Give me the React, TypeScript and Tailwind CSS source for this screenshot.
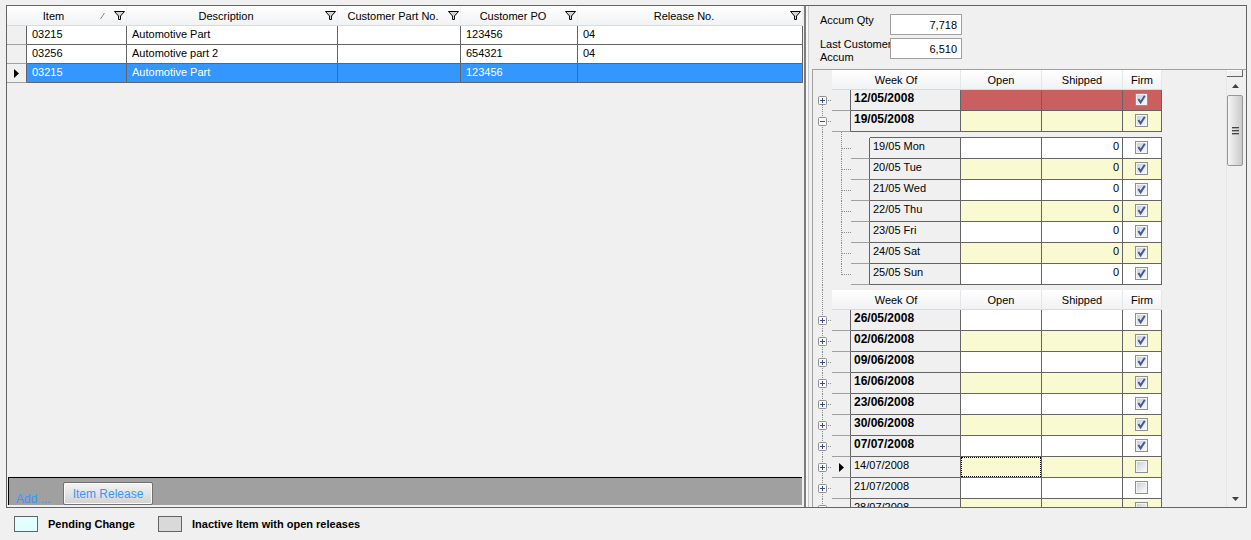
import { useState } from "react";

type Release = { item: string; description: string; partNo: string; po: string; release: string };
type Week = { date: string; firm: boolean; past?: boolean; days?: string[] };

const releases: Release[] = [
  { item: "03215", description: "Automotive Part", partNo: "", po: "123456", release: "04" },
  { item: "03256", description: "Automotive part 2", partNo: "", po: "654321", release: "04" },
  { item: "03215", description: "Automotive Part", partNo: "", po: "123456", release: "" },
];

const firstWeeks: Week[] = [
  { date: "12/05/2008", firm: true, past: true },
  {
    date: "19/05/2008",
    firm: true,
    days: ["19/05 Mon", "20/05 Tue", "21/05 Wed", "22/05 Thu", "23/05 Fri", "24/05 Sat", "25/05 Sun"],
  },
];

const laterWeeks: Week[] = [
  { date: "26/05/2008", firm: true },
  { date: "02/06/2008", firm: true },
  { date: "09/06/2008", firm: true },
  { date: "16/06/2008", firm: true },
  { date: "23/06/2008", firm: true },
  { date: "30/06/2008", firm: true },
  { date: "07/07/2008", firm: true },
  { date: "14/07/2008", firm: false },
  { date: "21/07/2008", firm: false },
  { date: "28/07/2008", firm: false },
];

function FilterIcon() {
  return (
    <svg width="11" height="9" viewBox="0 0 11 9" className="block">
      <path d="M0.5 0.5H10.5L6.5 5V8.5H4.5V5Z" fill="#d4d4d4" stroke="#000" />
    </svg>
  );
}

function RowArrow() {
  return (
    <svg width="5" height="9" viewBox="0 0 5 9" className="mx-auto block">
      <path d="M0 0L5 4.5L0 9Z" fill="#000" />
    </svg>
  );
}

function SortGlyph() {
  return (
    <svg width="6" height="8" viewBox="0 0 6 8" className="mr-2 block">
      <path d="M0.5 7L4.5 1" stroke="#8a8a8a" fill="none" />
    </svg>
  );
}

function HeaderCell({ label, sorted, span }: { label: string; sorted?: boolean; span?: number }) {
  return (
    <th
      colSpan={span}
      className="border-b border-b-[#dadada] border-r border-r-[#f0f0f0] bg-linear-to-b from-white to-[#f1f2f4] p-0 font-normal"
    >
      <div className="flex items-center pr-px">
        <span className="flex-1 text-center">{label}</span>
        {sorted && <SortGlyph />}
        <button type="button" aria-label={`Filter ${label}`}>
          <FilterIcon />
        </button>
      </div>
    </th>
  );
}

function ReleaseTable() {
  const [selected, setSelected] = useState(2);
  return (
    <table className="w-full table-fixed border-separate border-spacing-0 text-[11px] leading-4">
      <colgroup>
        <col className="w-[20px]" />
        <col className="w-[100px]" />
        <col className="w-[211px]" />
        <col className="w-[123px]" />
        <col className="w-[117px]" />
        <col />
      </colgroup>
      <thead>
        <tr className="h-5">
          <HeaderCell label="Item" sorted span={2} />
          <HeaderCell label="Description" />
          <HeaderCell label="Customer Part No." />
          <HeaderCell label="Customer PO" />
          <HeaderCell label="Release No." />
        </tr>
      </thead>
      <tbody>
        {releases.map((r, i) => {
          const on = i === selected;
          return (
            <tr key={i} onClick={() => setSelected(i)} className={on ? "h-[19px] bg-[#3397ff] text-white" : "h-[19px] bg-white"}>
              <td className="border-r border-b border-r-[#646464] border-b-[#a0a0a0] bg-[#f0f0f0] p-0 align-middle">
                {on && <RowArrow />}
              </td>
              {[r.item, r.description, r.partNo, r.po, r.release].map((v, c) => (
                <td key={c} className="border-r border-b border-[#646464] p-0 pl-[5px] align-top">
                  {v}
                </td>
              ))}
            </tr>
          );
        })}
      </tbody>
    </table>
  );
}

function FirmBox({ label, checked }: { label: string; checked: boolean }) {
  return (
    <span className="relative mt-[3px] ml-3 block size-[13px]">
      <input
        type="checkbox"
        aria-label={label}
        defaultChecked={checked}
        className="peer block size-[13px] appearance-none border border-[#8e8f8f] bg-linear-to-br from-[#c5cbd3] to-white shadow-[inset_0_0_0_1px_#f4f4f4]"
      />
      <svg
        viewBox="0 0 13 13"
        className="pointer-events-none absolute inset-0 hidden size-[13px] peer-checked:block"
      >
        <path d="M3.4 6L5.6 9.4L9.8 2.8" fill="none" stroke="#4259a0" strokeWidth="2" />
      </svg>
    </span>
  );
}

function Trunk({ day, last }: { day?: boolean; last?: boolean }) {
  return (
    <svg width="19" height="21" viewBox="0 0 19 21" className="block">
      <path d={last ? "M9.5 0V11" : "M9.5 0V21"} stroke="#8c8c8c" strokeDasharray="1 1" />
      {day && <path d="M10 10.5H19" stroke="#8c8c8c" strokeDasharray="1 1" />}
    </svg>
  );
}

function Expander({ open, first, label }: { open?: boolean; first?: boolean; label: string }) {
  return (
    <button type="button" aria-label={label} aria-expanded={!!open} className="block">
      <svg width="19" height="21" viewBox="0 0 19 21" className="block">
        <path d={first ? "M9.5 15V21" : "M9.5 0V21"} stroke="#8c8c8c" strokeDasharray="1 1" />
        <path d="M15 10.5H19" stroke="#8c8c8c" strokeDasharray="1 1" />
        <rect x="5.5" y="6.5" width="8" height="8" rx="1" fill="#f8f8f8" stroke="#919191" />
        <path d={open ? "M7 10.5H12" : "M7 10.5H12M9.5 8V13"} stroke="#3b4f8f" />
      </svg>
    </button>
  );
}

function BandHeader() {
  const cell =
    "border-b border-b-[#dadada] border-r border-r-[#e4e6e8] bg-linear-to-b from-white to-[#f1f2f4] p-0 font-normal";
  return (
    <>
      <th className={cell} colSpan={3}>
        Week Of
      </th>
      <th className={cell}>Open</th>
      <th className={cell}>Shipped</th>
      <th className={cell}>Firm</th>
    </>
  );
}

const selector = "border-r border-b border-r-[#646464] border-b-[#a0a0a0] p-0";
const value = "border-r border-b border-[#646464] p-0 align-top";

function WeekRow({ week, index, first }: { week: Week; index: number; first?: boolean }) {
  const current = week.date === "14/07/2008";
  const tone = week.past ? "bg-[#c95f5f]" : index % 2 ? "bg-[#fafad2]" : "bg-white";
  return (
    <tr className="h-[21px]">
      <td className="p-0">
        <Expander open={!!week.days} first={first} label={`Days of ${week.date}`} />
      </td>
      <td className={selector}>{current && <RowArrow />}</td>
      <td colSpan={2} className={`${value} pl-[3px] ${week.firm ? "text-[12px] font-bold" : ""}`}>
        {week.date}
      </td>
      <td className={`${value} ${tone}`}>
        {current && <div className="h-5 border border-dotted border-black" />}
      </td>
      <td className={`${value} ${tone}`} />
      <td className={`${value} ${tone}`}>
        <FirmBox label={`Firm ${week.date}`} checked={week.firm} />
      </td>
    </tr>
  );
}

function DayRows({ days }: { days: string[] }) {
  return (
    <>
      <tr className="h-[6px]">
        <td className="p-0">
          <svg width="19" height="6" className="block">
            <path d="M9.5 0V6" stroke="#8c8c8c" strokeDasharray="1 1" />
          </svg>
        </td>
        <td className="p-0">
          <svg width="19" height="6" className="block">
            <path d="M9.5 0V6" stroke="#8c8c8c" strokeDasharray="1 1" />
          </svg>
        </td>
        <td className="p-0" />
        <td colSpan={4} className="border-b border-[#646464] p-0" />
      </tr>
      {days.map((day, i) => {
        const tone = i % 2 ? "bg-[#fafad2]" : "bg-white";
        return (
          <tr key={day} className="h-[21px]">
            <td className="p-0">
              <Trunk />
            </td>
            <td className="p-0">
              <Trunk day last={i === days.length - 1} />
            </td>
            <td className={selector} />
            <td className={`${value} pl-[3px]`}>{day}</td>
            <td className={`${value} ${tone}`} />
            <td className={`${value} ${tone} pr-[3px] text-right`}>0</td>
            <td className={`${value} ${tone}`}>
              <FirmBox label={`Firm ${day}`} checked />
            </td>
          </tr>
        );
      })}
      <tr className="h-[5px]">
        <td className="p-0">
          <svg width="19" height="5" className="block">
            <path d="M9.5 0V5" stroke="#8c8c8c" strokeDasharray="1 1" />
          </svg>
        </td>
        <td colSpan={6} className="p-0" />
      </tr>
    </>
  );
}

function ScheduleTable() {
  return (
    <table className="w-[349px] table-fixed border-separate border-spacing-0 text-[11px] leading-4">
      <colgroup>
        <col className="w-[19px]" />
        <col className="w-[19px]" />
        <col className="w-[19px]" />
        <col className="w-[91px]" />
        <col className="w-[81px]" />
        <col className="w-[81px]" />
        <col className="w-[39px]" />
      </colgroup>
      <thead>
        <tr className="h-5">
          <td className="p-0" />
          <BandHeader />
        </tr>
      </thead>
      <tbody>
        {firstWeeks.map((w, i) => (
          <WeekRow key={w.date} week={w} index={i} first={i === 0} />
        ))}
        <DayRows days={firstWeeks[1].days ?? []} />
        <tr className="h-5">
          <td className="p-0">
            <svg width="19" height="20" className="block">
              <path d="M9.5 0V20" stroke="#8c8c8c" strokeDasharray="1 1" />
            </svg>
          </td>
          <BandHeader />
        </tr>
        {laterWeeks.map((w, i) => (
          <WeekRow key={w.date} week={w} index={i} />
        ))}
      </tbody>
    </table>
  );
}

function ScrollBar() {
  return (
    <div className="mr-[3px] flex w-[17px] flex-col items-center border-l border-[#e6e6e6]">
      <div className="h-[7px] w-full border-r border-b border-[#646464] bg-[#f0f0f0] shadow-[inset_1px_1px_0_#fff]" />
      <button type="button" aria-label="Scroll up" className="grid h-[18px] w-full place-items-center">
        <svg width="7" height="4" viewBox="0 0 7 4">
          <path d="M0 4L3.5 0L7 4Z" fill="#404040" />
        </svg>
      </button>
      <div className="grid h-[71px] w-full place-items-center rounded-xs border border-[#979797] bg-linear-to-r from-[#f5f5f5] to-[#c9cacc]">
        <svg width="7" height="8" viewBox="0 0 7 8">
          <path d="M0 0.5H7M0 3.5H7M0 6.5H7" stroke="#444" />
          <path d="M0 1.5H7M0 4.5H7M0 7.5H7" stroke="#aaa" />
        </svg>
      </div>
      <div className="flex-1" />
      <button type="button" aria-label="Scroll down" className="grid h-4 w-full place-items-center">
        <svg width="7" height="4" viewBox="0 0 7 4">
          <path d="M0 0L3.5 4L7 0Z" fill="#404040" />
        </svg>
      </button>
    </div>
  );
}

function Quantity({ id, label, amount }: { id: string; label: string; amount: string }) {
  return (
    <div className="flex h-6 items-start">
      <label htmlFor={id} className="w-[70px] shrink-0 text-[11px] leading-[13px] whitespace-pre">
        {label}
      </label>
      <input
        id={id}
        defaultValue={amount}
        className="h-[21px] w-[72px] border border-[#a0a0a0] bg-white pr-1 text-right text-[11px]"
      />
    </div>
  );
}

export default function App() {
  return (
    <div className="flex h-screen flex-col bg-[#f0f0f0] pt-[5px] font-['Liberation_Sans',Arial,sans-serif] text-black">
      <main className="mr-1 ml-1.5 flex min-h-0 flex-1 border border-[#646464]">
        <section className="flex min-w-0 flex-1 flex-col pr-px">
          <ReleaseTable />
          <div className="flex-1" />
          <div className="mx-px mb-0.5 flex h-7 items-end border-t border-l border-black bg-[#a0a0a0] pl-[7px] text-[12px] text-[#3397ff]">
            <span className="w-[47px] leading-3">Add ...</span>
            <button
              type="button"
              className="h-[23px] w-[90px] rounded-xs border border-[#707070] bg-linear-to-b from-[#f4f4f4] to-[#d2d2d2] shadow-[inset_0_0_0_1px_#fafafa]"
            >
              Item Release
            </button>
          </div>
        </section>
        <div className="w-1 cursor-col-resize border-l-2 border-[#7c7c7c] bg-[#f8f8f8]" />
        <section className="flex w-[438px] flex-col border-l border-[#c8c8c8]">
          <div className="flex h-[63px] flex-col pt-2 pl-[11px]">
            <Quantity id="accum-qty" label="Accum Qty" amount="7,718" />
            <Quantity id="last-accum" label={"Last Customer\nAccum"} amount="6,510" />
          </div>
          <div className="ml-[3px] flex min-h-0 flex-1 border-t border-l border-[#a0a0a0]">
            <div className="min-w-0 flex-1 overflow-hidden">
              <ScheduleTable />
            </div>
            <ScrollBar />
          </div>
        </section>
      </main>
      <footer className="flex h-8 items-center pl-3.5 text-[11px] font-bold">
        <span className="mr-2.5 h-4 w-6 border border-[#646464] bg-[#e0ffff]" />
        <span className="w-[110px]">Pending Change</span>
        <span className="mr-2.5 h-4 w-6 border border-[#646464] bg-[#d9d9d9]" />
        <span>Inactive Item with open releases</span>
      </footer>
    </div>
  );
}
